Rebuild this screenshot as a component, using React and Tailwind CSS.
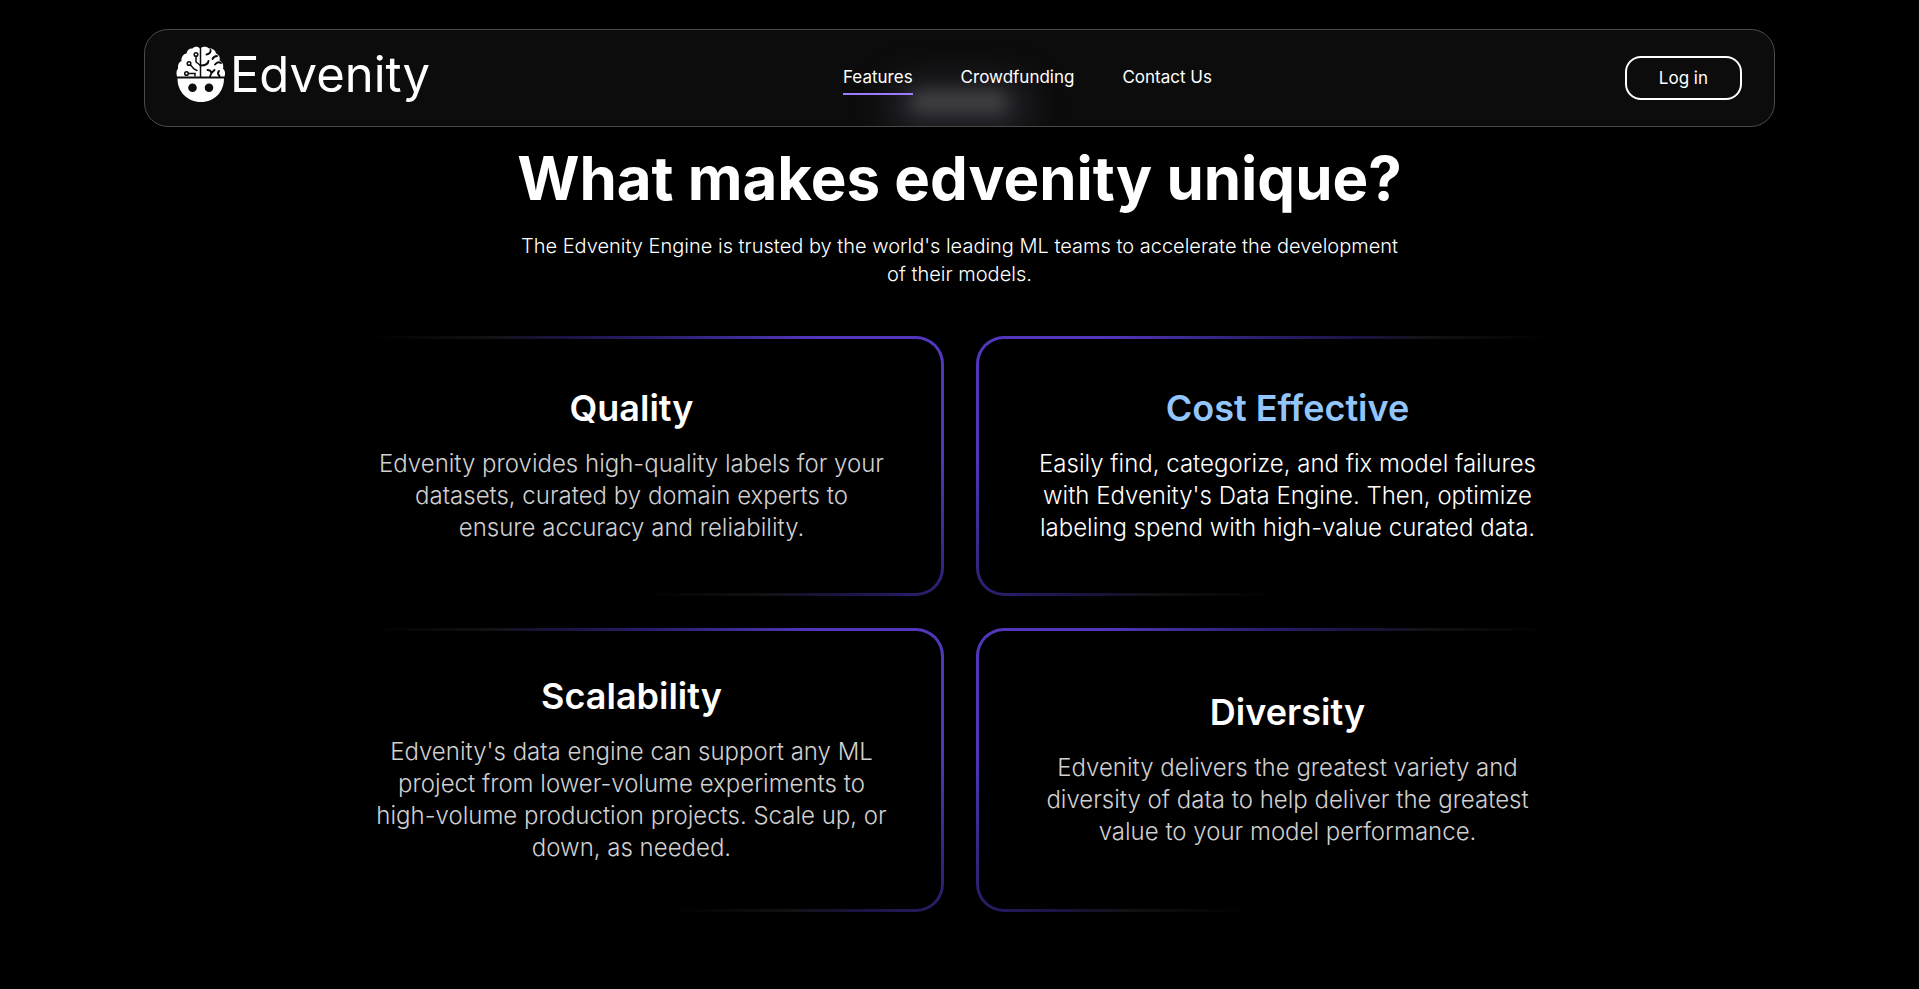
import clsx from 'clsx';

const NAV_LINKS = [
  { label: 'Features', href: '#features', active: true },
  { label: 'Crowdfunding', href: '#crowdfunding' },
  { label: 'Contact Us', href: '#contact' },
];

const FEATURES = [
  {
    title: 'Quality',
    text: 'Edvenity provides high-quality labels for your datasets, curated by domain experts to ensure accuracy and reliability.',
  },
  {
    title: 'Cost Effective',
    text: "Easily find, categorize, and fix model failures with Edvenity's Data Engine. Then, optimize labeling spend with high-value curated data.",
    highlighted: true,
  },
  {
    title: 'Scalability',
    text: "Edvenity's data engine can support any ML project from lower-volume experiments to high-volume production projects. Scale up, or down, as needed.",
  },
  {
    title: 'Diversity',
    text: 'Edvenity delivers the greatest variety and diversity of data to help deliver the greatest value to your model performance.',
  },
];

function LogoMark() {
  return (
    <svg viewBox="0 0 50 56" className="h-14 w-[50px] shrink-0" aria-hidden="true">
      {/* brain */}
      <path
        fill="#fff"
        d="M24 30.500H1C0 27 .5 24 2 22.500 1.500 18.500 3 16 5.500 15 5 11 7.500 8 10.500 7.500 11 4 14 2 16.500 2.500 18 .5 22 0 24 2.500 26.500 0 31 0 33 2.500 37 2 39.500 4.500 40 7.500 43 9 44.500 11.500 43.500 14.500 46.500 16 48 19 47 22.500 49.500 25 49.500 28 48.500 30.500Z"
      />
      <g fill="none" stroke="#0c0c0c" strokeWidth="1.500" strokeLinecap="round">
        <path d="M24.500 1v30" />
        <path d="M20 10.500v5.500l4.500 3.500M14.500 19l3.500 4 3 1.500M12.500 27.500h6.500V30" />
        <circle cx="20" cy="8.500" r="1.800" />
        <circle cx="13" cy="17.500" r="1.800" />
        <circle cx="10.500" cy="27.500" r="1.800" />
        <path
          strokeWidth="1.900"
          d="M24.500 19.500c4 0 7.500-1 8-4.500M34.500 4c.5 2-1 4-4 4.500M41 10c-2 .2-3.500 1-4.500 3M45 17c-2.500-1.500-4.500-.5-6 1.500M31.500 24c2 0 3.500 1 4 3M34 30.500l1.500-3.500 3-3M43.500 30c-2-2-1.500-4-.5-5"
        />
      </g>
      {/* face */}
      <path
        fill="#fff"
        fillRule="evenodd"
        d="M1.500 32.500h46.500C48 46 38.500 56 25 56S1.500 46 1.500 32.500ZM16.500 37.500a4.300 4.300 0 1 0 0 8.600 4.300 4.300 0 0 0 0-8.600ZM33 37.500a4.300 4.300 0 1 0 0 8.600 4.300 4.300 0 0 0 0-8.600Z"
      />
    </svg>
  );
}

function Header() {
  return (
    <header className="relative mx-auto mt-[29px] flex h-[98px] w-[85%] items-center justify-between overflow-hidden rounded-3xl border border-[#4a4a4a] bg-[#0c0c0c] pr-8 pl-[31px]">
      <div className="absolute top-12 left-1/2 h-14 w-36 -translate-x-1/2 rounded-full bg-[#24242b] blur-lg" />
      <div className="absolute top-[62px] left-1/2 h-5 w-24 -translate-x-1/2 rounded-full bg-[#424244] blur-sm" />

      <a href="#home" className="relative mb-2 flex items-center gap-1">
        <LogoMark />
        <span className="pt-0.5 text-[49px] leading-[56px]">Edvenity</span>
      </a>
      <nav className="relative flex gap-12">
        {NAV_LINKS.map(link => (
          <a
            key={link.label}
            href={link.href}
            className={clsx(
              'border-b-2 py-1 text-[17px] leading-6',
              link.active ? 'border-[#9b7bff]' : 'border-transparent'
            )}
          >
            {link.label}
          </a>
        ))}
      </nav>
      <button type="button" className="relative h-11 rounded-2xl border-2 border-white px-8 text-[17px] leading-6">
        Log in
      </button>
    </header>
  );
}

function FeatureCard({ feature, side }) {
  const left = side === 'left';
  return (
    <article
      className={clsx(
        'flex min-h-[260px] rounded-[28px] p-[3px]',
        left
          ? 'bg-[linear-gradient(-137deg,#5236bb_0px,#5236bb_90px,#2c2070_190px,#1c1345_260px,#121214_310px,#000_393px)]'
          : 'bg-[linear-gradient(137deg,#5236bb_0px,#5236bb_90px,#2c2070_190px,#1c1345_260px,#121214_310px,#000_393px)]'
      )}
    >
      <div
        className={clsx(
          'flex grow flex-col items-center justify-center rounded-[25px] bg-black py-[45px] text-center',
          left ? 'pr-[53px] pl-[29px]' : 'pr-[29px] pl-[53px]'
        )}
      >
        <h3 className={clsx('mb-5 text-4xl font-semibold', feature.highlighted && 'text-[#93c5fd]')}>
          {feature.title}
        </h3>
        <p className={clsx('text-2xl font-light', feature.highlighted ? 'text-white' : 'text-[#d0d0d0]')}>
          {feature.text}
        </p>
      </div>
    </article>
  );
}

export default function App() {
  return (
    <div className="flow-root min-h-screen bg-black font-['Inter',sans-serif] text-white">
      <Header />
      <main id="features" className="mx-auto max-w-[1232px] pt-[21px] pb-16">
        <div className="mx-auto max-w-[900px] text-center">
          <h1 className="text-6xl font-bold">What makes edvenity unique?</h1>
          <p className="mt-6 text-xl leading-7 font-light">
            The Edvenity Engine is trusted by the world's leading ML teams to accelerate the development of their
            models.
          </p>
        </div>
        <div className="mt-12 grid grid-cols-2 gap-8">
          {FEATURES.map((feature, i) => (
            <FeatureCard key={feature.title} feature={feature} side={i % 2 === 0 ? 'left' : 'right'} />
          ))}
        </div>
      </main>
    </div>
  );
}
